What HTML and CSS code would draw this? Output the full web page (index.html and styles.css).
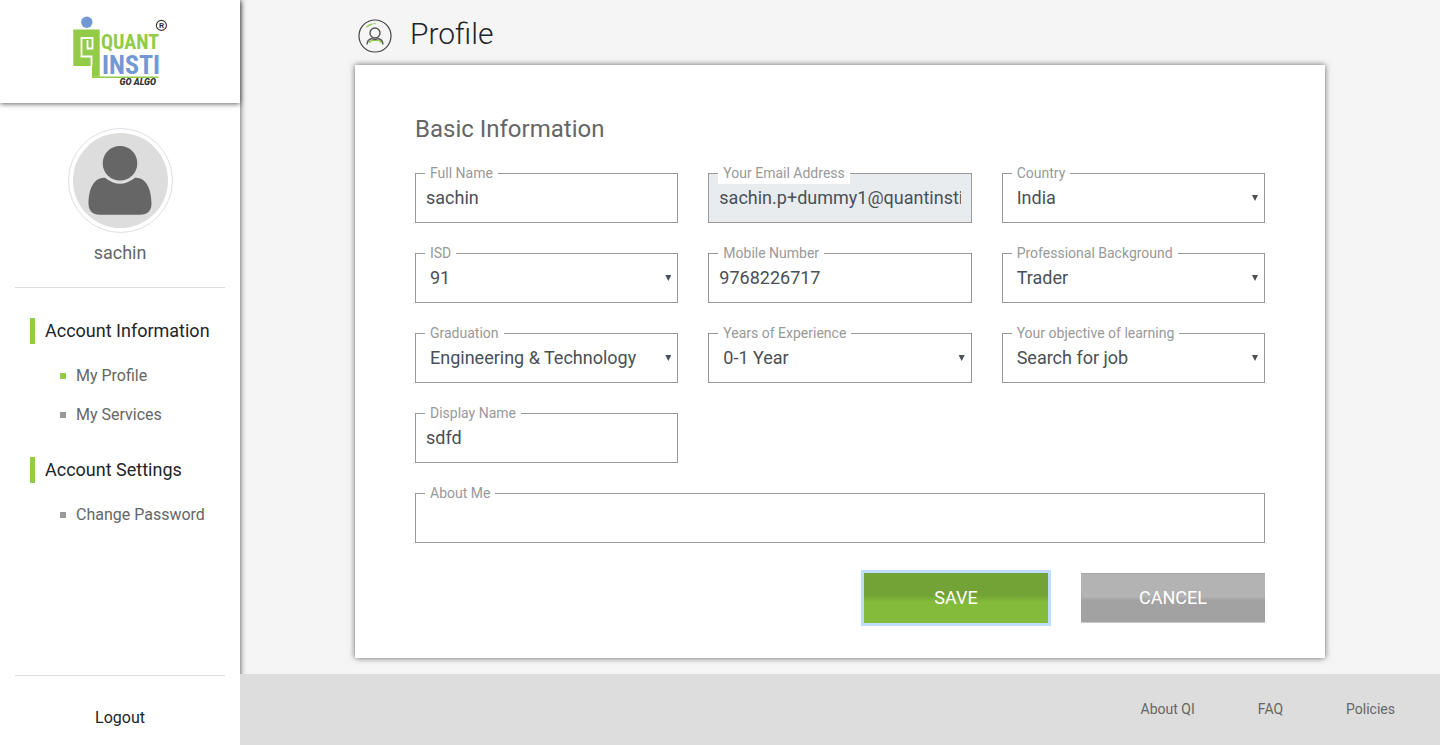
FILE: index.html
```html
<!DOCTYPE html>
<html lang="en">
<head>
<meta charset="utf-8">
<meta name="viewport" content="width=device-width, initial-scale=1">
<title>Profile</title>
<link rel="stylesheet" href="styles.css">
</head>
<body>
<div class="layout">
  <aside class="sidebar">
    <a class="brand" href="#" aria-label="QuantInsti home">
      <svg width="98" height="74" viewBox="71 14 98 74" aria-hidden="true">
        <circle cx="86.8" cy="22.3" r="5.7" fill="#7299d3"/>
        <path d="M73.3 29.5H99.7V76.7H92V66H73.3Z" fill="#92cb48"/>
        <path d="M87.500 40V48.500H92.500V38H81.500V56.500H92.500M91.500 56.500V66.500" fill="none" stroke="#fff" stroke-width="1.8"/>
        <text class="logo-quant" x="101" y="49">QUANT</text>
        <text class="logo-insti" x="102" y="74">INSTI</text>
        <path d="M92 77.3H158.5" stroke="#92cb48" stroke-width="1.5"/>
        <text class="logo-algo" x="119.5" y="85.400">GO ALGO</text>
        <circle cx="161.4" cy="25.4" r="5" fill="none" stroke="#333" stroke-width="1.1"/>
        <text class="logo-mark" x="158.9" y="28.2">R</text>
      </svg>
    </a>
    <div class="user">
      <div class="avatar">
        <svg width="95" height="95" viewBox="0 0 95 95" aria-hidden="true">
          <circle cx="47.5" cy="47.5" r="47.5" fill="#ddd"/>
          <circle cx="47" cy="30.3" r="17.3" fill="#666"/>
          <path d="M32 44.8Q47 56.8 62 44.8C73 44 78.5 56 78.5 71Q78 81.7 67 81.7H27Q16 81.7 15.5 71C15.500 56 21 44 32 44.800Z" fill="#666"/>
        </svg>
      </div>
      <p class="user-name">sachin</p>
    </div>
    <nav class="menu" aria-label="Account">
      <h2 class="menu-title">Account Information</h2>
      <ul class="menu-list">
        <li><a class="menu-link is-active" href="#">My Profile</a></li>
        <li><a class="menu-link" href="#">My Services</a></li>
      </ul>
      <h2 class="menu-title">Account Settings</h2>
      <ul class="menu-list">
        <li><a class="menu-link" href="#">Change Password</a></li>
      </ul>
    </nav>
    <a class="logout" href="#">Logout</a>
  </aside>

  <div class="page">
    <main class="content">
      <header class="page-head">
        <svg width="34" height="34" viewBox="0 0 34 34" fill="none" aria-hidden="true">
          <circle cx="17" cy="17" r="16" stroke="#444" stroke-width="1.2"/>
          <path d="M8.500 8.200Q12 4.600 17.500 4.500" stroke="#92cb48" stroke-width="1.3" stroke-dasharray="7 1 4"/>
          <path d="M11.500 24Q12 21.400 15 21.400H20Q22.600 21.600 23 24" stroke="#92cb48" stroke-width="1.4"/>
          <circle cx="17" cy="14" r="5" stroke="#555" stroke-width="1.400"/>
          <path d="M9 25.500Q9.300 20.500 13.400 19.700Q17 21.200 20.600 19.700Q24.700 20.500 25 25.500" stroke="#555" stroke-width="1.400"/>
        </svg>
        <h1 class="page-title">Profile</h1>
      </header>
      <form class="card">
        <h2 class="card-title">Basic Information</h2>
        <div class="fields">
          <div class="field">
            <label for="name">Full Name</label>
            <input id="name" type="text" value="sachin">
          </div>
          <div class="field">
            <label for="email">Your Email Address</label>
            <input id="email" type="text" value="sachin.p+dummy1@quantinsti.com" readonly>
          </div>
          <div class="field field-select">
            <label for="country">Country</label>
            <select id="country"><option>India</option></select>
          </div>
          <div class="field field-select">
            <label for="isd">ISD</label>
            <select id="isd"><option>91</option></select>
          </div>
          <div class="field">
            <label for="mobile">Mobile Number</label>
            <input id="mobile" type="text" value="9768226717">
          </div>
          <div class="field field-select">
            <label for="background">Professional Background</label>
            <select id="background"><option>Trader</option></select>
          </div>
          <div class="field field-select">
            <label for="graduation">Graduation</label>
            <select id="graduation"><option>Engineering &amp; Technology</option></select>
          </div>
          <div class="field field-select">
            <label for="experience">Years of Experience</label>
            <select id="experience"><option>0-1 Year</option></select>
          </div>
          <div class="field field-select">
            <label for="objective">Your objective of learning</label>
            <select id="objective"><option>Search for job</option></select>
          </div>
          <div class="field">
            <label for="display">Display Name</label>
            <input id="display" type="text" value="sdfd">
          </div>
          <div class="field field-wide">
            <label for="about">About Me</label>
            <input id="about" type="text">
          </div>
        </div>
        <div class="actions">
          <button class="btn btn-save" type="button">SAVE</button>
          <button class="btn btn-cancel" type="button">CANCEL</button>
        </div>
      </form>
    </main>
    <footer class="footer">
      <a href="#">About QI</a>
      <a href="#">FAQ</a>
      <a href="#">Policies</a>
    </footer>
  </div>
</div>
</body>
</html>
```
FILE: styles.css
```css
* {
  box-sizing: border-box;
}

body {
  margin: 0;
  background: #f5f5f5;
  color: #212529;
  font-family: Roboto, "Liberation Sans", sans-serif;
  font-size: 16px;
  line-height: 24px;
}

h1, h2, p, ul {
  margin: 0;
  padding: 0;
  font-weight: 400;
}

a {
  color: inherit;
  text-decoration: none;
}

.layout {
  display: flex;
  min-height: 100vh;
}

/* Sidebar */
.sidebar {
  display: flex;
  flex: 0 0 240px;
  flex-direction: column;
  background: #fff;
  box-shadow: 0 0 6px rgba(0, 0, 0, 0.7);
}

.brand {
  display: flex;
  justify-content: center;
  padding: 14px 0 15px;
  box-shadow: 0 1px 5px rgba(0, 0, 0, 0.6);
}

.logo-quant,
.logo-insti {
  font-family: "Roboto Condensed", "Liberation Sans Narrow", "Liberation Sans", sans-serif;
  font-weight: 700;
}

.logo-quant {
  fill: #92cb48;
  font-size: 20px;
}

.logo-insti {
  fill: #7299d3;
  font-size: 26px;
}

.logo-algo {
  fill: #333;
  font-family: Roboto, sans-serif;
  font-size: 9px;
  font-style: italic;
  font-weight: 900;
}

.logo-mark {
  fill: #333;
  font-family: Roboto, sans-serif;
  font-size: 8px;
  font-weight: 700;
}

.user {
  display: flex;
  flex-direction: column;
  align-items: center;
  gap: 8px;
  margin: 0 15px;
  padding: 25px 0 22px;
  border-bottom: 1px solid #ddd;
}

.avatar {
  display: flex;
  padding: 4px;
  border: 1px solid #dedee6;
  border-radius: 50%;
}

.user-name {
  color: #666;
  font-size: 18px;
}

.menu {
  flex: 1;
  padding: 30px 15px 0 30px;
}

.menu-title {
  padding-left: 10px;
  border-left: 5px solid #92cb48;
  font-size: 18px;
  line-height: 26px;
}

.menu-list {
  display: flex;
  flex-direction: column;
  gap: 14px;
  padding: 19px 0 30px 30px;
  list-style: none;
}

.menu-link {
  display: flex;
  align-items: center;
  gap: 10px;
  color: #666;
  line-height: 25px;
}

.menu-link::before {
  width: 6px;
  height: 6px;
  background: #999;
  content: "";
}

.menu-link.is-active::before {
  background: #92cb48;
}

.logout {
  margin: 0 15px;
  padding: 30px 0 15px;
  border-top: 1px solid #ddd;
  text-align: center;
}

/* Main area */
.page {
  display: flex;
  flex: 1;
  flex-direction: column;
  min-width: 0;
}

.content {
  flex: 1;
  width: 100%;
  max-width: 1000px;
  margin: 0 auto;
  padding: 14px 15px 16px;
}

.page-head {
  display: flex;
  align-items: center;
  gap: 18px;
  padding: 0 3px 11px;
}

.page-head svg {
  margin-top: 4px;
}

.page-title {
  font-size: 30px;
  font-weight: 300;
  line-height: 40px;
}

.card {
  padding: 48px 60px 35px;
  background: #fff;
  box-shadow: 0 0 6px rgba(0, 0, 0, 0.6);
}

.card-title {
  margin-bottom: 28px;
  color: #666;
  font-size: 24px;
  line-height: 32px;
}

.fields {
  display: grid;
  grid-template-columns: repeat(3, minmax(0, 1fr));
  gap: 30px;
}

.field {
  position: relative;
}

.field-wide {
  grid-column: 1 / -1;
}

/* The label sits over the top border of its control */
.field label {
  position: absolute;
  top: -10px;
  left: 10px;
  padding: 0 5px;
  background: #fff;
  color: #999;
  font-size: 14px;
  line-height: 21px;
}

.field input,
.field select {
  display: block;
  width: 100%;
  height: 50px;
  padding: 0 10px 2px;
  border: 1px solid #999;
  border-radius: 0;
  background: #fff;
  color: #495057;
  font: inherit;
  font-size: 18px;
  appearance: none;
}

.field select {
  padding: 0 14px;
}

.field input[readonly] {
  background: #e9ecef;
}

.field-select::after {
  position: absolute;
  top: 22px;
  right: 7px;
  width: 6px;
  height: 6px;
  background: #495057;
  clip-path: polygon(0 0, 100% 0, 50% 100%);
  content: "";
  pointer-events: none;
}

.actions {
  display: flex;
  justify-content: flex-end;
  gap: 33px;
  margin-top: 30px;
}

.btn {
  width: 184px;
  height: 50px;
  padding: 0;
  border: 0;
  color: #fff;
  font: inherit;
  font-size: 18px;
}

.btn-save {
  background: linear-gradient(#73a336 45%, #84bb3b 58%);
  box-shadow: 0 0 0 3px #bfdeff;
}

.btn-cancel {
  background: linear-gradient(#b3b3b3 48%, #a2a2a2 54%);
  box-shadow: inset 0 1px #a5a5a5, inset 0 -1px #c8c8c8;
}

.footer {
  position: relative;
  display: flex;
  justify-content: flex-end;
  gap: 63px;
  padding: 23px 45px 24px;
  background: #ddd;
  color: #666;
  font-size: 14px;
}
```
